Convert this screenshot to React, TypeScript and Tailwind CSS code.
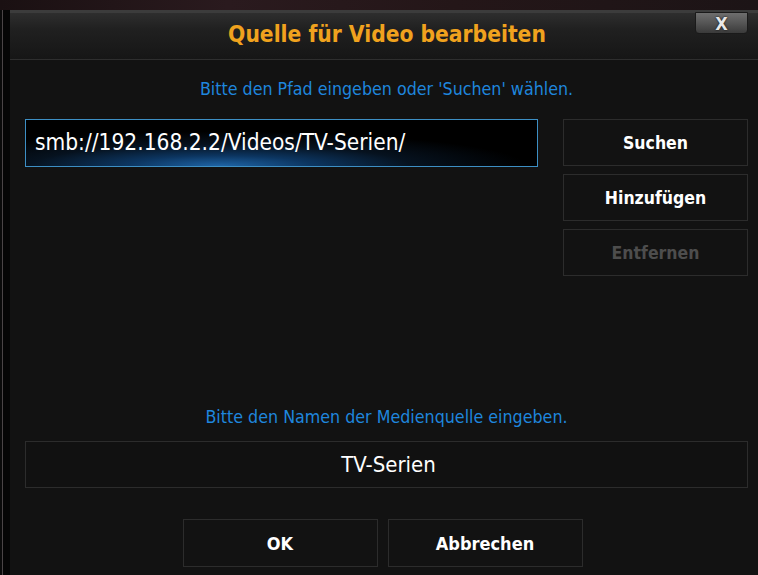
import React from 'react'

const font = { fontFamily: '"DejaVu Sans Condensed", "DejaVu Sans", sans-serif' }

const SideButton = ({ label, disabled }: { label: string; disabled?: boolean }) => (
    <div
        className={`h-[47px] border border-[#2c2c2c] bg-[#121212] flex items-center justify-center text-[17.5px] font-bold pt-[2px] ${disabled ? 'text-[#4d4d4d]' : 'text-white'}`}
    >
        {label}
    </div>
)

const FooterButton = ({ label }: { label: string }) => (
    <div className="w-[195px] h-[48px] border border-[#2c2c2c] bg-[#121212] flex items-center justify-center text-[18px] font-bold text-white">
        {label}
    </div>
)

export default function App() {
    return (
        <div className="w-[758px] h-[575px] bg-black flex flex-col overflow-hidden" style={font}>
            {/* backdrop strip above the dialog */}
            <div className="h-[10px] shrink-0 bg-[linear-gradient(90deg,#1a1012_0%,#2a1a1e_30%,#241618_60%,#1c1416_100%)]" />

            <div className="flex flex-1">
                {/* left edge of the backdrop */}
                <div className="w-[10px] shrink-0 flex">
                    <div className="w-[2px] bg-[#0a0a0a]" />
                    <div className="w-[1px] bg-[#4a4446]" />
                    <div className="flex-1 bg-[#050505]" />
                </div>

                <div className="relative flex-1 bg-[#121212] flex flex-col">
                    {/* header */}
                    <div className="h-[50px] shrink-0 border-t-[3px] border-[#3c3c3c] border-b border-b-[#2e2e2e] bg-[linear-gradient(180deg,#2e2e2e_0%,#202020_35%,#161616_100%)] flex items-center justify-center">
                        <span className="text-[22.6px] font-bold text-[#f0a21e] pl-[6px] -mt-[2px]">
                            Quelle für Video bearbeiten
                        </span>
                    </div>

                    {/* close button */}
                    <div className="absolute right-[10px] top-[2px] w-[53px] h-[22px] rounded-b-[4px] border border-[#1a1a1a] bg-[linear-gradient(180deg,#6e6e6e_0%,#585858_45%,#3a3a3a_100%)] flex items-center justify-center text-[18px] font-bold text-[#e8e8e8] [text-shadow:0_0_2px_#000]">
                        X
                    </div>

                    <p className="text-center text-[17.7px] text-[#1f86dd] mt-[19px] pl-[5px] leading-[20px]">
                        Bitte den Pfad eingeben oder 'Suchen' wählen.
                    </p>

                    <div className="flex mt-[20px] pl-[15px] pr-[10px]">
                        {/* path input */}
                        <div className="flex-1">
                            <div className="w-[513px] h-[48px] border border-[#3d8fc4] bg-[radial-gradient(ellipse_60%_75%_at_38%_100%,#1e64a6_0%,#0c3560_30%,#06121f_62%,#000_100%)] flex items-center pl-[9px] text-[22.5px] text-white">
                                smb://192.168.2.2/Videos/TV-Serien/
                            </div>
                        </div>
                        <div className="w-[185px] flex flex-col gap-[8px]">
                            <SideButton label="Suchen" />
                            <SideButton label="Hinzufügen" />
                            <SideButton label="Entfernen" disabled />
                        </div>
                    </div>

                    <p className="text-center text-[17.7px] text-[#1f86dd] mt-[131px] pl-[5px] leading-[20px]">
                        Bitte den Namen der Medienquelle eingeben.
                    </p>

                    <div className="mt-[14px] ml-[15px] mr-[10px] h-[47px] border border-[#2c2c2c] bg-[#111] flex items-center justify-center text-[22px] text-white pl-[4px]">
                        TV-Serien
                    </div>

                    <div className="flex justify-center gap-[10px] mt-[31px] pr-[3px]">
                        <FooterButton label="OK" />
                        <FooterButton label="Abbrechen" />
                    </div>
                </div>
            </div>
        </div>
    )
}
